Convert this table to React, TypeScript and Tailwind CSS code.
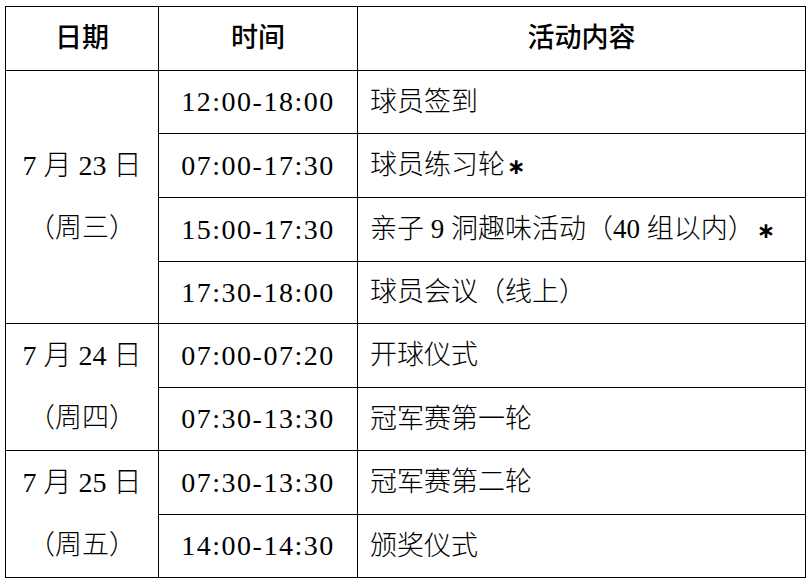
const font = { fontFamily: '"Liberation Serif", "Noto Sans CJK SC", serif' };

type Row = { time: string; activity: string; star?: boolean; h: string };

const groups: { date: string; week: string; rows: Row[] }[] = [
  {
    date: '7 月 23 日',
    week: '（周三）',
    rows: [
      { time: '12:00-18:00', activity: '球员签到', h: 'h-[63px]' },
      { time: '07:00-17:30', activity: '球员练习轮', star: true, h: 'h-[64px]' },
      { time: '15:00-17:30', activity: '亲子 9 洞趣味活动（40 组以内）', star: true, h: 'h-[64px]' },
      { time: '17:30-18:00', activity: '球员会议（线上）', h: 'h-[62px]' },
    ],
  },
  {
    date: '7 月 24 日',
    week: '（周四）',
    rows: [
      { time: '07:00-07:20', activity: '开球仪式', h: 'h-[64px]' },
      { time: '07:30-13:30', activity: '冠军赛第一轮', h: 'h-[63px]' },
    ],
  },
  {
    date: '7 月 25 日',
    week: '（周五）',
    rows: [
      { time: '07:30-13:30', activity: '冠军赛第二轮', h: 'h-[64px]' },
      { time: '14:00-14:30', activity: '颁奖仪式', h: 'h-[63px]' },
    ],
  },
];

const cell = 'border border-black p-0 align-middle';

export default function App() {
  return (
    <div className="w-[808px] h-[580px] bg-white pl-[5px] pt-[6px] text-black" style={font}>
      <table className="table-fixed border-collapse w-[800px] text-[27px] font-light">
        <colgroup>
          <col className="w-[153px]" />
          <col className="w-[199px]" />
          <col className="w-[448px]" />
        </colgroup>
        <thead>
          <tr className="h-[64px]">
            <th className={`${cell} font-medium text-center`}>日期</th>
            <th className={`${cell} font-medium text-center`}>时间</th>
            <th className={`${cell} font-medium text-center`}>活动内容</th>
          </tr>
        </thead>
        <tbody>
          {groups.map((g) =>
            g.rows.map((r, i) => (
              <tr key={g.date + i} className={r.h}>
                {i === 0 && (
                  <td rowSpan={g.rows.length} className={`${cell} text-center`}>
                    <div className="flex flex-col items-center gap-[38px] leading-[25px]">
                      <span className="text-[28px]">{g.date}</span>
                      <span>{g.week}</span>
                    </div>
                  </td>
                )}
                <td className={`${cell} text-center text-[28px] tracking-[1.5px]`}>{r.time}</td>
                <td className={`${cell} pl-[12px] whitespace-nowrap`}>
                  {r.activity}
                  {r.star && (
                    <span className="font-bold text-[22px] pl-[2px]" style={{ fontFamily: '"DejaVu Sans", sans-serif' }}>
                      ∗
                    </span>
                  )}
                </td>
              </tr>
            ))
          )}
        </tbody>
      </table>
    </div>
  );
}
